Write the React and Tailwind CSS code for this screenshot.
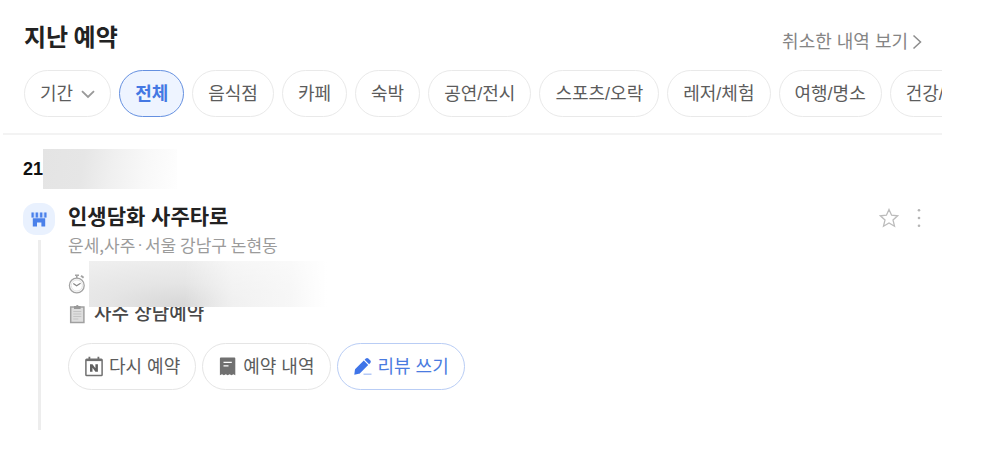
import React from "react";

const categories = ["음식점", "카페", "숙박", "공연/전시", "스포츠/오락", "레저/체험", "여행/명소", "건강/뷰티"];

const pill =
  "flex h-[47px] shrink-0 items-center rounded-full border px-[15px] pt-[2px] font-['Liberation_Sans','Noto_Sans_CJK_KR',sans-serif] text-[18px] whitespace-nowrap";

function StoreIcon() {
  return (
    <svg width="16" height="15" viewBox="0 0 16 15" fill="#4a80ea" aria-hidden="true">
      <path d="M0.500 0.500h15v5.500H0.500z" fill="#c9dbfc" />
      <path d="M0.500 0.500h2.200v5H0.500zM4.700 0.500h2.200v5H4.700zM9.100 0.500h2.200v5H9.100zM13.300 0.500h2.200v5h-2.200z" />
      <path d="M1.800 6.300h12.400v8.200H10.400V10.500H6v4H1.800z" />
    </svg>
  );
}

function StopwatchIcon() {
  return (
    <svg width="18" height="20" viewBox="0 0 18 20" fill="none" stroke="#a3a3a3" aria-hidden="true">
      <circle cx="8.800" cy="11.500" r="7.400" strokeWidth="1.300" />
      <circle cx="8.800" cy="11.500" r="5.600" stroke="#e2e2e2" />
      <path d="M8.800 4V1.500M7 1.200h4" strokeWidth="1.600" />
      <path d="M13 1.800l2.600 2" strokeWidth="2" />
      <path d="M5.300 9.500l3.300 2.300 4-2.500" stroke="#888" strokeWidth="1.200" />
    </svg>
  );
}

function ClipboardIcon() {
  return (
    <svg width="18" height="20" viewBox="0 0 18 20" fill="none" aria-hidden="true">
      <rect x="2.700" y="3" width="13.200" height="15.500" fill="#dedede" stroke="#a0a0a0" strokeWidth="1.500" />
      <path d="M6 2h2a1.400 1.400 0 0 1 2.600 0h2v3H6z" fill="#999" />
      <path d="M5.300 7.500h8M5.300 10h8M5.300 12.500h8M5.300 15h5" stroke="#c4c4c4" />
    </svg>
  );
}

function CalendarIcon() {
  return (
    <svg width="20" height="21" viewBox="0 0 20 21" fill="none" stroke="#707070" className="mb-0.5" aria-hidden="true">
      <rect x="1.900" y="3.200" width="16.200" height="16.300" rx="0.800" strokeWidth="1.500" />
      <path d="M2 4.200h16" strokeWidth="1.800" />
      <path d="M5.400 0.800v3M14.400 0.800v3" strokeWidth="1.800" />
      <path d="M6 15.800V8.200h2.500l2.900 4V8.200h2.500v7.600h-2.500l-2.900-4v4z" fill="#606060" stroke="none" />
    </svg>
  );
}

function ReceiptIcon() {
  return (
    <svg width="20" height="21" viewBox="0 0 20 21" className="mb-0.5" aria-hidden="true">
      <path d="M2.800 1.600h13.600a.9.900 0 0 1 .9.900V19.200l-1.900-.9-1.900.9-1.900-.9-1.900.9-1.900-.9-1.900.9-1.900-.9-2.100.9V2.500a.9.900 0 0 1 .9-.9z" fill="#707070" />
      <path d="M5.500 6.300h8.300M5.500 9.800h5" stroke="#fff" strokeWidth="1.300" />
    </svg>
  );
}

function PencilIcon() {
  return (
    <svg width="20" height="21" viewBox="0 0 20 21" className="mb-0.5" aria-hidden="true">
      <path d="M1.300 18.700l.6-4.700a2 2 0 0 1 .6-1.200l8.300-8.200 4.400 4.400-8.200 8.200a2 2 0 0 1-1.200.6z" fill="#3f74e8" />
      <path d="M11.600 3.800l1.200-1.200a1.800 1.800 0 0 1 2.500 0l2 2a1.800 1.800 0 0 1 0 2.500l-1.200 1.200z" fill="#3f74e8" />
      <path d="M10.500 18.200h8" stroke="#a9c1f5" strokeWidth="1.300" />
    </svg>
  );
}

export default function App() {
  return (
    <main className="mr-[58px] ml-[3px] bg-white font-['Noto_Sans_CJK_KR','Noto_Sans',sans-serif] text-[#5c5c5c]">
      <header className="border-b-2 border-[#f3f3f3] pt-[18px] pb-4 pl-[21px]">
        <div className="flex items-start justify-between pr-5">
          <h1 className="text-[24px] leading-9 font-bold text-[#222]">지난 예약</h1>
          <a href="#cancelled" className="flex items-center gap-1 pt-[10px] font-['Liberation_Sans','Noto_Sans_CJK_KR',sans-serif] text-[18px] leading-7 text-[#858585]">
            취소한 내역 보기
            <svg width="10" height="16" viewBox="0 0 10 16" fill="none" stroke="#8c8c8c" strokeWidth="1.500" aria-hidden="true">
              <path d="M1.500 1.500L8.500 8l-7 6.500" />
            </svg>
          </a>
        </div>
        <nav aria-label="예약 분류" className="mt-[14px] flex gap-2 overflow-hidden">
          <button type="button" className={`${pill} gap-2 border-[#e9e9e9]`}>
            기간
            <svg width="14" height="9" viewBox="0 0 14 9" fill="none" stroke="#999" strokeWidth="1.800" aria-hidden="true">
              <path d="M1 1.200l6 5.800 6-5.800" />
            </svg>
          </button>
          <button type="button" aria-pressed="true" className={`${pill} border-[#6590e0] bg-[#eef4ff] font-bold text-[#4478e3]`}>
            전체
          </button>
          {categories.map((name) => (
            <button key={name} type="button" className={`${pill} border-[#e9e9e9]`}>
              {name}
            </button>
          ))}
        </nav>
      </header>

      <section className="pt-[14px] pl-5">
        <h2 className="flex h-10 items-center font-['Liberation_Sans',sans-serif] text-[18px] font-bold text-[#111]">
          <span className="w-5">21</span>
          <span className="h-10 w-[134px] bg-[linear-gradient(100deg,#e4e4e4_0%,#e6e6e6_30%,#f0f0f0_52%,#f8f8f8_75%,#fefefe_100%)]" />
        </h2>

        <article className="mt-[14px] flex gap-[13px]">
          <div className="flex w-8 flex-col items-center">
            <span className="flex size-8 items-center justify-center rounded-[13px] bg-[#e9f1fe]">
              <StoreIcon />
            </span>
            <span className="mt-[5px] w-[3px] flex-1 bg-[#ededed]" />
          </div>

          <div className="flex-1 pb-[40px]">
            <div className="flex items-start justify-between">
              <div>
                <h3 className="font-['Liberation_Sans','Noto_Sans_CJK_KR',sans-serif] text-[21px] leading-7 font-bold text-[#222]">인생담화 사주타로</h3>
                <p className="flex gap-[2px] pb-[2px] text-[17px] leading-7 text-[#9b9b9b]">
                  <span>운세,사주</span>
                  <span className="font-['Liberation_Sans',sans-serif]">·</span>
                  <span>서울 강남구 논현동</span>
                </p>
              </div>
              <div className="flex gap-[14px] pt-[5px] pr-[17px]">
                <button type="button" aria-label="즐겨찾기">
                  <svg width="20" height="20" viewBox="0 0 20 20" fill="none" stroke="#bcbcbc" strokeWidth="1.300" aria-hidden="true">
                    <path d="M10 1.500l2.600 5.700 6 .6-4.600 4.100 1.500 6.300-5.500-3.300-5.500 3.300L6 11.900 1.400 7.800l6-.6z" />
                  </svg>
                </button>
                <button type="button" aria-label="더보기">
                  <svg width="12" height="20" viewBox="0 0 12 20" fill="#b5b5b5" aria-hidden="true">
                    <circle cx="6" cy="2.200" r="1.300" />
                    <circle cx="6" cy="10" r="1.300" />
                    <circle cx="6" cy="17.700" r="1.300" />
                  </svg>
                </button>
              </div>
            </div>

            <div className="relative z-10 flex h-[46px] items-center gap-[3px]">
              <StopwatchIcon />
              <span className="h-full w-[238px] bg-white">
                <span className="block h-full bg-[linear-gradient(to_right,transparent_40%,#ffffff80_60%,#ffffffa0_85%,white_100%),radial-gradient(ellipse_at_38%_95%,#d8d8d8_0%,#e5e5e5_35%,#eeeeee_75%,#f2f2f2_100%)]" />
              </span>
            </div>
            <div className="-mt-2 flex h-[30px] items-center gap-2">
              <ClipboardIcon />
              <span className="font-['Liberation_Sans','Noto_Sans_CJK_KR',sans-serif] text-[19px] leading-7 font-medium text-[#484848]">사주 상담예약</span>
            </div>

            <div className="mt-[14px] flex gap-[6px]">
              <button type="button" className={`${pill} gap-[5px] border-[#e5e5e5]`}>
                <CalendarIcon />
                다시 예약
              </button>
              <button type="button" className={`${pill} gap-[5px] border-[#e5e5e5]`}>
                <ReceiptIcon />
                예약 내역
              </button>
              <button type="button" className={`${pill} gap-[5px] border-[#b9cdf5] text-[#4a7be0]`}>
                <PencilIcon />
                리뷰 쓰기
              </button>
            </div>
          </div>
        </article>
      </section>
    </main>
  );
}
